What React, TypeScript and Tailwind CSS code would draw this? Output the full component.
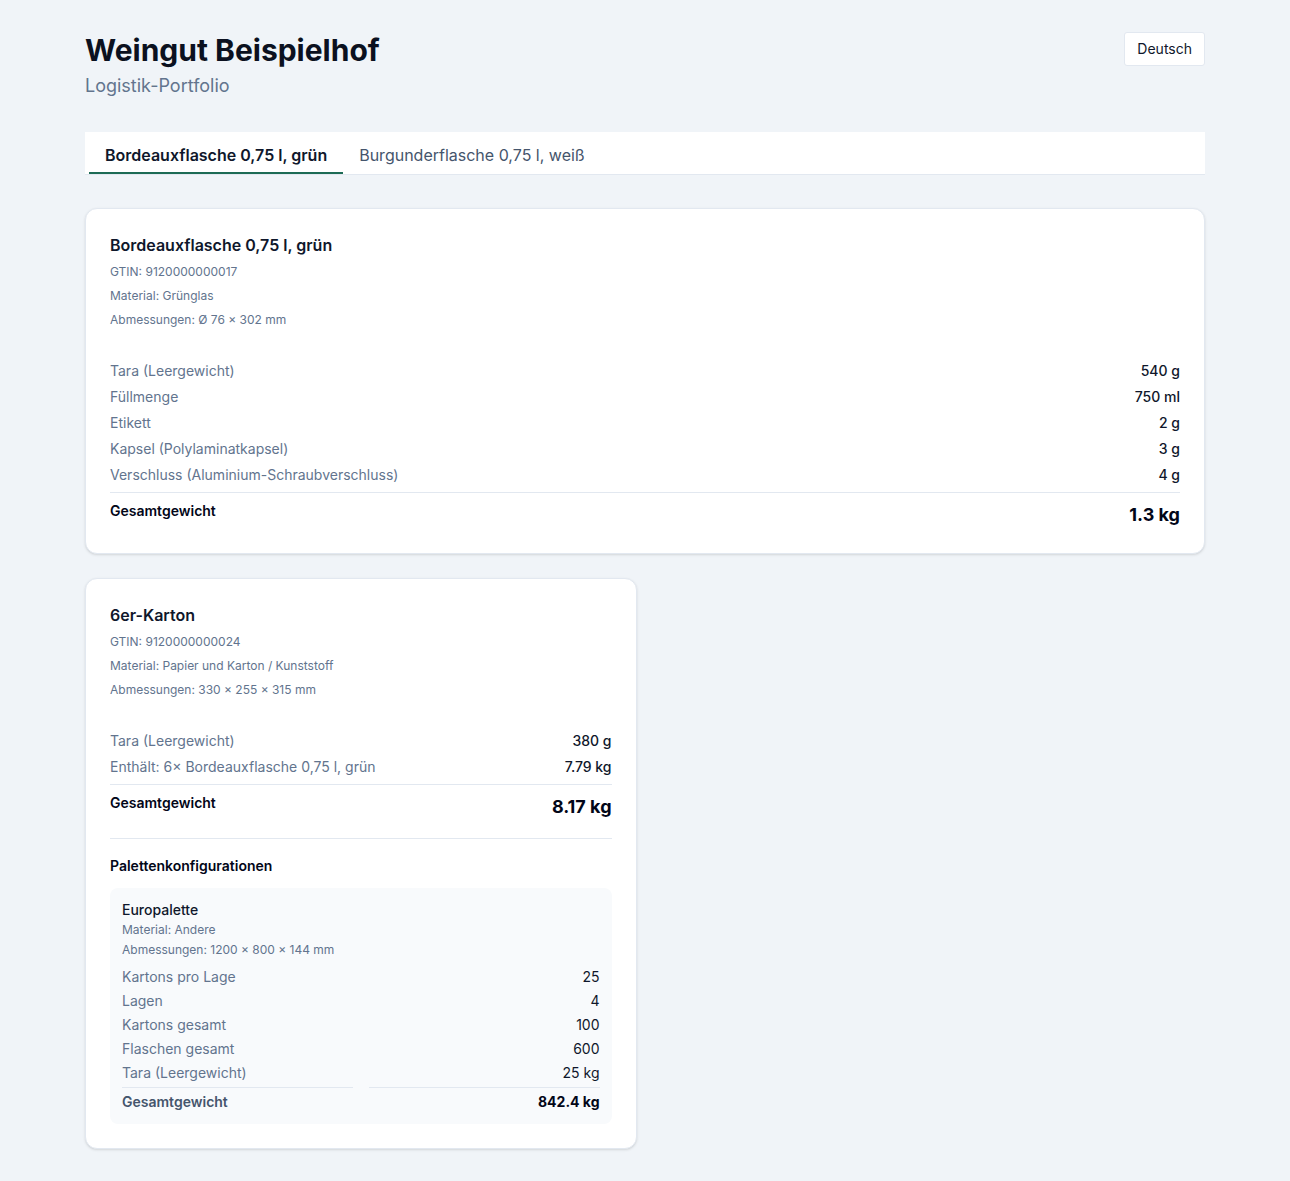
import { useState } from 'react'

type Row = { label: string; value: string }

const bottle = {
  name: 'Bordeauxflasche 0,75 l, grün',
  meta: ['GTIN: 9120000000017', 'Material: Grünglas', 'Abmessungen: Ø 76 × 302 mm'],
  rows: [
    { label: 'Tara (Leergewicht)', value: '540 g' },
    { label: 'Füllmenge', value: '750 ml' },
    { label: 'Etikett', value: '2 g' },
    { label: 'Kapsel (Polylaminatkapsel)', value: '3 g' },
    { label: 'Verschluss (Aluminium-Schraubverschluss)', value: '4 g' },
  ] as Row[],
  total: '1.3 kg',
}

const carton = {
  name: '6er-Karton',
  meta: ['GTIN: 9120000000024', 'Material: Papier und Karton / Kunststoff', 'Abmessungen: 330 × 255 × 315 mm'],
  rows: [
    { label: 'Tara (Leergewicht)', value: '380 g' },
    { label: 'Enthält: 6× Bordeauxflasche 0,75 l, grün', value: '7.79 kg' },
  ] as Row[],
  total: '8.17 kg',
}

const pallet: Row[] = [
  { label: 'Kartons pro Lage', value: '25' },
  { label: 'Lagen', value: '4' },
  { label: 'Kartons gesamt', value: '100' },
  { label: 'Flaschen gesamt', value: '600' },
  { label: 'Tara (Leergewicht)', value: '25 kg' },
]

function ItemHeader({ name, meta }: { name: string; meta: string[] }) {
  return (
    <div>
      <h2 className="text-base leading-6 font-semibold text-slate-900">{name}</h2>
      <div className="mt-[3px]">
        {meta.map((m) => (
          <p key={m} className="text-xs leading-6 text-slate-500">
            {m}
          </p>
        ))}
      </div>
    </div>
  )
}

function WeightRows({ rows, total }: { rows: Row[]; total: string }) {
  return (
    <div className="mt-[26px]">
      {rows.map((r) => (
        <div key={r.label} className="flex justify-between text-sm leading-[26px]">
          <span className="text-slate-500">{r.label}</span>
          <span className="font-medium text-slate-900">{r.value}</span>
        </div>
      ))}
      <div className="mt-[4px] border-t border-slate-200 pt-2 flex justify-between items-start">
        <span className="text-sm leading-5 font-semibold text-slate-950">Gesamtgewicht</span>
        <span className="text-lg leading-7 font-bold text-slate-950">{total}</span>
      </div>
    </div>
  )
}

export default function App() {
  const [tab, setTab] = useState(0)
  const tabs = ['Bordeauxflasche 0,75 l, grün', 'Burgunderflasche 0,75 l, weiß']

  return (
    <div
      className="min-h-screen bg-[#f0f4f8] pb-8"
      style={{ fontFamily: 'Inter, "Noto Sans", sans-serif' }}
    >
      <div className="max-w-[1120px] mx-auto pt-8">
        {/* Header */}
        <div className="flex justify-between items-start">
          <div>
            <h1 className="text-3xl leading-9 font-bold text-[#0b1120]">Weingut Beispielhof</h1>
            <p className="mt-1 text-lg leading-7 text-slate-500">Logistik-Portfolio</p>
          </div>
          <button className="h-[34px] px-3 text-sm text-slate-900 bg-white border border-slate-200 rounded-[3px]">
            Deutsch
          </button>
        </div>

        {/* Tabs */}
        <div className="mt-8 flex bg-white border-b border-slate-200 pl-1">
          {tabs.map((t, i) => (
            <button
              key={t}
              onClick={() => setTab(i)}
              className={`px-4 h-[42px] pt-[11px] pb-[5px] leading-6 text-base border-b-2 ${
                tab === i
                  ? 'font-semibold text-slate-900 border-[#1d6b55]'
                  : 'text-slate-600 border-transparent'
              }`}
            >
              {t}
            </button>
          ))}
        </div>

        {/* Cards */}
        <div className="mt-[33px] grid grid-cols-2 gap-x-[17px] gap-y-6 items-start">
          <div className="col-span-2 bg-white border border-slate-200 rounded-xl shadow-sm p-6">
            <ItemHeader name={bottle.name} meta={bottle.meta} />
            <WeightRows rows={bottle.rows} total={bottle.total} />
          </div>

          <div className="bg-white border border-slate-200 rounded-xl shadow-sm p-6">
            <ItemHeader name={carton.name} meta={carton.meta} />
            <WeightRows rows={carton.rows} total={carton.total} />

            <div className="mt-[17px] border-t border-slate-200 pt-[17px]">
              <h3 className="text-sm leading-5 font-semibold text-slate-950">Palettenkonfigurationen</h3>
              <div className="mt-3 bg-slate-50 rounded-lg px-3 pt-3 pb-3">
                <p className="text-sm leading-5 font-medium text-slate-900">Europalette</p>
                <p className="text-xs leading-5 text-slate-500">Material: Andere</p>
                <p className="text-xs leading-5 text-slate-500">Abmessungen: 1200 × 800 × 144 mm</p>
                <div className="mt-[5px] grid grid-cols-2 gap-x-4 text-sm">
                  {pallet.map((r) => (
                    <div key={r.label} className="contents">
                      <span className="leading-6 text-slate-500">{r.label}</span>
                      <span className="leading-6 text-right text-slate-900">{r.value}</span>
                    </div>
                  ))}
                  <span className="mt-0.5 border-t border-slate-200 pt-1 leading-5 font-semibold text-slate-600">
                    Gesamtgewicht
                  </span>
                  <span className="mt-0.5 border-t border-slate-200 pt-1 leading-5 text-right font-bold text-slate-950">
                    842.4 kg
                  </span>
                </div>
              </div>
            </div>
          </div>
        </div>
      </div>
    </div>
  )
}
